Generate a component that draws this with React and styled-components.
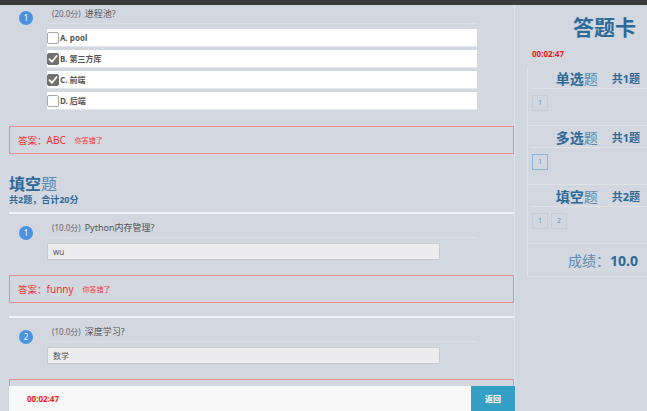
import React from 'react';
import styled, { createGlobalStyle } from 'styled-components';

const Global = createGlobalStyle`
  html, body { margin: 0; padding: 0; overflow: hidden; background: #d3d7df; }
  body { font-family: "Noto Sans", "Noto Sans CJK SC", sans-serif; }
  * { box-sizing: border-box; }
`;

const TopBar = styled.div`
  height: 5px;
  background: #3b3b3b;
`;

const Layout = styled.div`
  display: flex;
  align-items: stretch;
  height: 381px;
  overflow: hidden;
`;

const Main = styled.div`
  margin-left: 9px;
  width: 506px;
  border-right: 1px solid #dfe2e7;
  display: flex;
  flex-direction: column;
`;

const QBlock = styled.div`
  display: grid;
  grid-template-columns: 38px 430px;
  align-items: start;
`;

const Circle = styled.div`
  width: 14px;
  height: 14px;
  margin-left: 10px;
  margin-top: ${p => p.$mt}px;
  border-radius: 50%;
  background: #4a92e0;
  color: #fff;
  font-size: 8px;
  line-height: 14px;
  text-align: center;
`;

const QBody = styled.div`
  display: flex;
  flex-direction: column;
`;

const QHead = styled.div`
  padding: ${p => p.$pt}px 0 4px 5px;
  border-bottom: 1px solid #dcdfe5;
  font-size: 9px;
  line-height: 10px;
  color: #555;
  white-space: nowrap;
`;

const Score = styled.span`
  font-size: 8px;
  color: #666;
  margin-right: 4px;
`;

const Options = styled.div`
  margin-top: 5px;
  display: flex;
  flex-direction: column;
  gap: 3px;
`;

const Option = styled.div`
  height: 18px;
  background: #fff;
  border-bottom: 1px solid #e4e6ea;
  display: flex;
  align-items: center;
  font-size: 8px;
  font-weight: bold;
  color: #555;
`;

const Check = styled.span`
  width: 12px;
  height: 12px;
  border-radius: 2px;
  margin-right: 1px;
  display: inline-flex;
  align-items: center;
  justify-content: center;
  background: ${p => (p.$on ? '#6f6f6f' : '#fff')};
  border: 1px solid ${p => (p.$on ? '#6f6f6f' : '#a8a8a8')};
`;

const Input = styled.div`
  margin-top: 5px;
  width: 393px;
  height: 17px;
  background: #ececee;
  border: 1px solid #c9cbd0;
  font-size: 8px;
  line-height: 15px;
  padding-left: 5px;
  color: #555;
`;

const Answer = styled.div`
  margin-top: ${p => p.$mt}px;
  height: 28px;
  flex-shrink: 0;
  border: 1px solid #e98b8b;
  display: flex;
  align-items: center;
  padding-left: 8px;
  color: #f03232;
  font-size: 9.5px;
`;

const AnsVal = styled.span`
  font-size: 10px;
`;

const AnsNote = styled.span`
  margin-left: 9px;
  font-size: 7px;
`;

const SecTitle = styled.div`
  margin-top: 20px;
  font-size: 16px;
  line-height: 20px;
  font-weight: bold;
  color: #2d6a98;
`;

const Light = styled.span`
  font-weight: normal;
  color: #5a8ab3;
`;

const SecSub = styled.div`
  font-size: 9px;
  line-height: 12px;
  font-weight: bold;
  color: #2d6a98;
`;

const Sep = styled.div`
  margin-top: ${p => p.$mt}px;
  height: 2px;
  flex-shrink: 0;
  background: #eef0f3;
`;

const Side = styled.div`
  margin-left: 12px;
  width: 120px;
  display: flex;
  flex-direction: column;
`;

const CardTitle = styled.div`
  margin-top: 8px;
  padding-right: 11px;
  text-align: right;
  font-size: 21px;
  line-height: 28px;
  font-weight: bold;
  color: #2d6a98;
`;

const Timer = styled.div`
  margin-top: ${p => p.$mt || 0}px;
  padding-left: ${p => p.$pl || 0}px;
  font-size: 8px;
  line-height: 10px;
  font-weight: bold;
  color: #f01818;
`;

const Card = styled.div`
  margin-top: 8px;
  border-left: 1px solid #dfe2e7;
  border-bottom: 1px solid #dfe2e7;
`;

const CardHead = styled.div`
  height: 22px;
  margin-left: 3px;
  border-bottom: 1px solid #dfe2e7;
  display: flex;
  align-items: center;
  justify-content: flex-end;
  gap: 14px;
  padding-right: 7px;
`;

const HeadLabel = styled.span`
  font-size: 14px;
  font-weight: bold;
  color: #2d6a98;
`;

const HeadCount = styled.span`
  font-size: 11px;
  font-weight: bold;
  color: #2d6a98;
`;

const Items = styled.div`
  height: 37px;
  border-bottom: 1px solid #dfe2e7;
  display: flex;
  gap: 3px;
  padding: 6px 0 0 4px;
`;

const Item = styled.div`
  width: 16px;
  height: 16px;
  border: 1px solid ${p => (p.$active ? '#86b4d4' : '#c9cdd6')};
  font-size: 7px;
  line-height: 14px;
  text-align: center;
  color: #6e93b5;
`;

const ScoreRow = styled.div`
  height: 32px;
  display: flex;
  align-items: center;
  justify-content: flex-end;
  padding-right: 9px;
  font-size: 14px;
  color: #5a8ab3;
`;

const ScoreVal = styled.span`
  font-weight: bold;
  color: #2d6a98;
`;

const BottomBar = styled.div`
  margin-left: 9px;
  width: 506px;
  height: 25px;
  background: #f8f8f8;
  display: flex;
  align-items: center;
  justify-content: space-between;
  padding-left: 18px;
`;

const BackBtn = styled.button`
  width: 44px;
  height: 25px;
  border: none;
  background: #35a0c5;
  color: #fff;
  font-family: inherit;
  font-size: 8px;
  font-weight: bold;
  padding: 0;
`;

const CheckMark = () => (
  <svg width="10" height="10" viewBox="0 0 10 10">
    <path d="M1.5 5.2 L4 7.8 L8.6 2" fill="none" stroke="#fff" strokeWidth="1.8" strokeLinecap="round" strokeLinejoin="round" />
  </svg>
);

const options = [
  { label: 'A. pool', on: false },
  { label: 'B. 第三方库', on: true },
  { label: 'C. 前端', on: true },
  { label: 'D. 后端', on: false },
];

export default function App() {
  return (
    <>
      <Global />
      <TopBar />
      <Layout>
        <Main>
          <QBlock>
            <Circle $mt={6}>1</Circle>
            <QBody>
              <QHead $pt={4}><Score>(20.0分)</Score>进程池?</QHead>
              <Options>
                {options.map(o => (
                  <Option key={o.label}>
                    <Check $on={o.on}>{o.on && <CheckMark />}</Check>
                    {o.label}
                  </Option>
                ))}
              </Options>
            </QBody>
          </QBlock>
          <Answer $mt={16}>答案：<AnsVal>ABC</AnsVal><AnsNote>你答错了</AnsNote></Answer>

          <SecTitle>填空<Light>题</Light></SecTitle>
          <SecSub>共2题，合计20分</SecSub>
          <Sep $mt={6} />

          <QBlock>
            <Circle $mt={12}>1</Circle>
            <QBody>
              <QHead $pt={9}><Score>(10.0分)</Score>Python内存管理?</QHead>
              <Input>wu</Input>
            </QBody>
          </QBlock>
          <Answer $mt={15}>答案：<AnsVal>funny</AnsVal><AnsNote>你答错了</AnsNote></Answer>
          <Sep $mt={13} />

          <QBlock>
            <Circle $mt={12}>2</Circle>
            <QBody>
              <QHead $pt={9}><Score>(10.0分)</Score>深度学习?</QHead>
              <Input>数学</Input>
            </QBody>
          </QBlock>
          <Answer $mt={15} />
        </Main>

        <Side>
          <CardTitle>答题卡</CardTitle>
          <Timer $mt={8} $pl={5}>00:02:47</Timer>
          <Card>
            <CardHead>
              <HeadLabel>单选<Light>题</Light></HeadLabel>
              <HeadCount>共1题</HeadCount>
            </CardHead>
            <Items><Item>1</Item></Items>
            <CardHead>
              <HeadLabel>多选<Light>题</Light></HeadLabel>
              <HeadCount>共1题</HeadCount>
            </CardHead>
            <Items><Item $active>1</Item></Items>
            <CardHead>
              <HeadLabel>填空<Light>题</Light></HeadLabel>
              <HeadCount>共2题</HeadCount>
            </CardHead>
            <Items><Item>1</Item><Item>2</Item></Items>
            <ScoreRow>成绩：<ScoreVal>10.0</ScoreVal></ScoreRow>
          </Card>
        </Side>
      </Layout>

      <BottomBar>
        <Timer>00:02:47</Timer>
        <BackBtn>返回</BackBtn>
      </BottomBar>
    </>
  );
}
